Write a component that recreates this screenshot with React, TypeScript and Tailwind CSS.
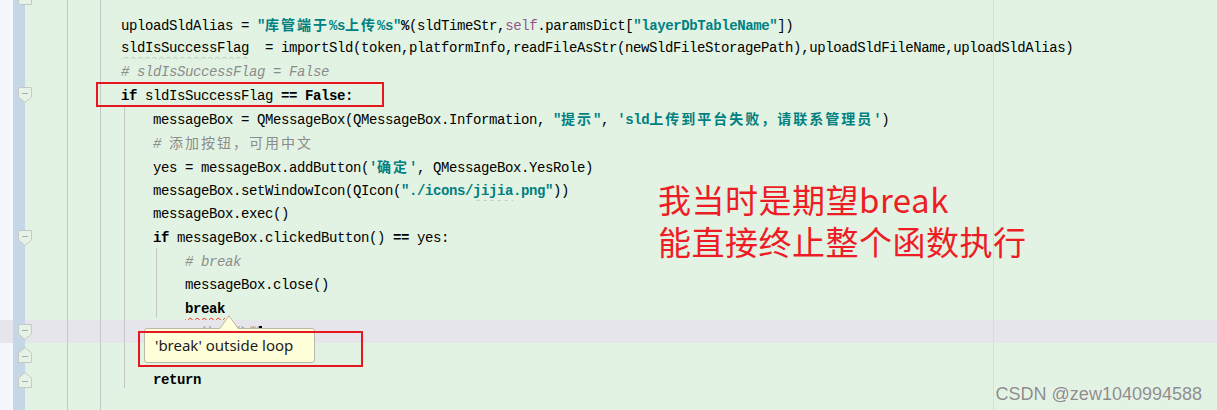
import { FunctionComponent, ReactNode } from 'react';

//  ---------------------------------------------------------------------------
//  TYPES
//  ---------------------------------------------------------------------------

interface RowProps {
  indent?: 0 | 1 | 2;
  hl?: boolean;
  children?: ReactNode;
}

interface FoldProps {
  top: string;
  up?: boolean;
}

//  ---------------------------------------------------------------------------
//  UTILS
//  ---------------------------------------------------------------------------

const indents = {
  0: 'pl-[96px]',
  1: 'pl-[128px]',
  2: 'pl-[160px]',
};

// text pieces
const S = ({ children }: { children: ReactNode }) => (
  <span className="font-bold text-[#008080]">{children}</span>
);
const K = ({ children }: { children: ReactNode }) => <span className="font-bold">{children}</span>;
const Cm = ({ children }: { children: ReactNode }) => (
  <span className="italic text-[#8c8c8c]">{children}</span>
);
const Z = ({ children }: { children: ReactNode }) => (
  <span className="font-['Noto_Sans_CJK_SC'] not-italic text-[14px] tracking-[2px]">{children}</span>
);
const W = ({ children, red }: { children: ReactNode; red?: boolean }) => (
  <span
    className={
      red
        ? 'underline decoration-wavy decoration-[#ff2020] decoration-1 underline-offset-[4px]'
        : 'underline decoration-wavy decoration-[#b7c4b7] decoration-1 underline-offset-[4px]'
    }
  >
    {children}
  </span>
);

//  ---------------------------------------------------------------------------
//  UI
//  ---------------------------------------------------------------------------

const Row: FunctionComponent<RowProps> = ({ indent = 0, hl, children }) => {
  return (
    <div className="flex h-[23.73px] shrink-0">
      <div className={hl ? 'w-[13px] bg-[#e5e5eb]' : 'w-[13px] bg-[#f6f7fc]'} />
      <div className="w-[12px] bg-[#c5d6e7]" />
      <div
        className={`flex flex-1 items-center whitespace-pre pt-[4px] ${indents[indent]} ${
          hl ? 'bg-[#e5e5eb]' : 'bg-[#e2f3e3]'
        }`}
      >
        <span>{children}</span>
      </div>
    </div>
  );
};

const Fold: FunctionComponent<FoldProps> = ({ top, up }) => {
  return (
    <svg
      className={`absolute left-[18px] ${top}`}
      width="14"
      height="16"
      viewBox="0 0 14 16"
    >
      <path
        d={up ? 'M0.5 15.5 H13.5 V6 L7 0.5 L0.5 6 Z' : 'M0.5 0.5 H13.5 V10 L7 15.5 L0.5 10 Z'}
        fill="#e6f2e6"
        stroke="#c6cac6"
      />
      <line x1="4" x2="10" y1={up ? 9.5 : 6.5} y2={up ? 9.5 : 6.5} stroke="#a8aca8" />
    </svg>
  );
};

const Editor: FunctionComponent<{}> = () => {
  return (
    <div className="relative h-[410px] w-[1217px] overflow-hidden font-['Liberation_Mono'] text-[14px] tracking-[-0.4px] text-black">
      <div className="flex h-full flex-col">
        <div className="flex h-[11.2px] shrink-0">
          <div className="w-[13px] bg-[#f6f7fc]" />
          <div className="w-[12px] bg-[#c5d6e7]" />
          <div className="flex-1 bg-[#e2f3e3]" />
        </div>
        <Row>
          <W>uploadSldAlias</W> = <S>"<Z>库管端于</Z>%s<Z>上传</Z>%s"</S><K>%</K>(sldTimeStr,<span className="text-[#94558d]">self</span>.paramsDict[<S>"layerDbTableName"</S>])
        </Row>
        <Row>
          <W>sldIsSuccessFlag</W>  = importSld(token,platformInfo,readFileAsStr(newSldFileStoragePath),uploadSldFileName,uploadSldAlias)
        </Row>
        <Row>
          <Cm># sldIsSuccessFlag = False</Cm>
        </Row>
        <Row>
          <K>if</K> <W>sldIsSuccessFlag</W> <K>== False:</K>
        </Row>
        <Row indent={1}>
          messageBox = QMessageBox(QMessageBox.Information, <S>"<Z>提示</Z>"</S>, <S>'sld<Z>上传到平台失败，请联系管理员</Z>'</S>)
        </Row>
        <Row indent={1}>
          <Cm># <Z>添加按钮，可用中文</Z></Cm>
        </Row>
        <Row indent={1}>
          yes = messageBox.addButton(<S>'<Z>确定</Z>'</S>, QMessageBox.YesRole)
        </Row>
        <Row indent={1}>
          messageBox.setWindowIcon(QIcon(<S>"./icons/<W>jijia</W>.png"</S>))
        </Row>
        <Row indent={1}>messageBox.exec()</Row>
        <Row indent={1}>
          <K>if</K> messageBox.clickedButton() <K>==</K> yes:
        </Row>
        <Row indent={2}>
          <Cm># break</Cm>
        </Row>
        <Row indent={2}>messageBox.close()</Row>
        <Row indent={2}>
          <K>
            <W red>break</W>
          </K>
        </Row>
        <Row indent={2} hl>
          <Cm># <Z>待定参数</Z></Cm>
          <span className="-ml-[6px] inline-block h-[14px] w-[3px] -translate-y-[1px] bg-black align-middle" />
        </Row>
        <Row indent={1}>{''}</Row>
        <Row indent={1}>
          <K>return</K>
        </Row>
        <div className="flex flex-1">
          <div className="w-[13px] bg-[#f6f7fc]" />
          <div className="w-[12px] bg-[#c5d6e7]" />
          <div className="flex-1 bg-[#e2f3e3]" />
        </div>
      </div>

      {/* editor decorations */}
      <div className="pointer-events-none absolute inset-0">
        <div className="absolute left-[67px] top-0 h-full w-px bg-[#c4c8c4]" />
        <div className="absolute left-[100px] top-0 h-full w-px bg-[#c4c8c4]" />
        <div className="absolute left-[124px] top-[106px] h-[282px] w-px bg-[#c4c8c4]" />
        <div className="absolute left-[156px] top-[248px] h-[70px] w-px bg-[#c4c8c4]" />
        <div className="absolute left-[993px] top-0 h-full w-px bg-[#d6dcd6]" />
        <Fold top="top-[-11px]" up />
        <Fold top="top-[87px]" />
        <Fold top="top-[230px]" />
        <Fold top="top-[324px]" />
        <Fold top="top-[347px]" up />
        <Fold top="top-[372px]" up />
      </div>

      {/* tooltip */}
      <div className="absolute left-[144px] top-[328px] flex h-[35px] w-[171px] items-center rounded-[3px] border border-[#b9b9a6] bg-[#ffffda] pl-[10px] font-['Noto_Sans'] text-[15px] tracking-normal text-[#1c1c1c]">
        'break' outside loop
      </div>
      <svg className="absolute left-[219px] top-[315px]" width="20" height="15" viewBox="0 0 20 15">
        <path d="M0 14.5 L10 0.8 L20 14.5 Z" fill="#ffffda" />
        <path d="M0.5 14 L10 0.8 L19.5 14" fill="none" stroke="#b9b9a6" />
      </svg>

      {/* annotations */}
      <div className="absolute left-[96px] top-[82px] h-[25px] w-[288px] border-2 border-[#e5171f]" />
      <div className="absolute left-[138px] top-[331px] h-[36px] w-[225px] border-2 border-[#e5171f]" />
      <div className="absolute left-[658px] top-[178px] font-['Noto_Sans_CJK_SC'] text-[33px] leading-[42px] tracking-[0.5px] text-[#ee1c25]">
        <div>我当时是期望break</div>
        <div>能直接终止整个函数执行</div>
      </div>

      <div className="absolute right-[15px] top-[385px] font-['Liberation_Sans'] text-[18px] leading-[18px] tracking-normal text-[#8c8c8c] [text-shadow:0_0_1px_#ffffff]">
        CSDN @zew1040994588
      </div>
    </div>
  );
};

export default Editor;
